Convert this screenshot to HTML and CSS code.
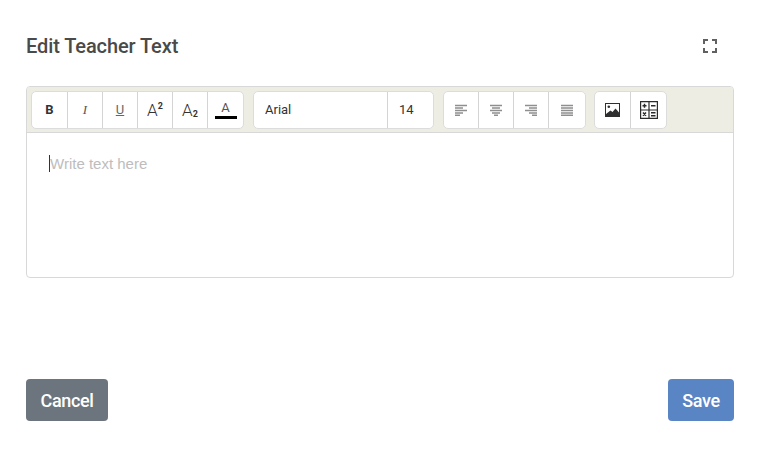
FILE: index.html
```html
<!DOCTYPE html>
<html lang="en">
<head>
  <meta charset="UTF-8" />
  <title>Edit Teacher Text</title>
  <link rel="stylesheet" href="styles.css">
</head>
<body>
  <div class="modal">
    <div class="modal-header">
      <h1>Edit Teacher Text</h1>
      <button class="expand-btn" aria-label="Fullscreen">
        <svg width="14" height="14" viewBox="0 0 14 14" fill="none" stroke="#616161" stroke-width="2">
          <path d="M1 5V1H5M9 1H13V5M13 9V13H9M5 13H1V9" />
        </svg>
      </button>
    </div>

    <div class="editor">
      <div class="toolbar">
        <div class="tool-group">
          <button class="tool tool-first tool-bold">B</button>
          <button class="tool tool-italic">I</button>
          <button class="tool tool-underline">U</button>
          <button class="tool tool-script">A<sup>2</sup></button>
          <button class="tool tool-script">A<sub>2</sub></button>
          <button class="tool tool-color"><span>A</span><i class="color-bar"></i></button>
        </div>

        <div class="tool-group">
          <div class="tool tool-font">Arial</div>
          <div class="tool tool-size">14</div>
        </div>

        <div class="tool-group">
          <button class="tool">
            <svg width="12" height="12" viewBox="0 0 12 12" stroke="#8f8f8f" stroke-width="1.4">
              <path d="M0 1.500H12M0 4H8M0 6.500H12M0 9H8M0 11.300H5" />
            </svg>
          </button>
          <button class="tool">
            <svg width="12" height="12" viewBox="0 0 12 12" stroke="#8f8f8f" stroke-width="1.4">
              <path d="M0 1.500H12M2 4H10M0 6.500H12M2 9H10M4 11.300H8" />
            </svg>
          </button>
          <button class="tool">
            <svg width="12" height="12" viewBox="0 0 12 12" stroke="#8f8f8f" stroke-width="1.4">
              <path d="M0 1.500H12M4 4H12M0 6.500H12M4 9H12M7 11.300H12" />
            </svg>
          </button>
          <button class="tool tool-last">
            <svg width="12" height="12" viewBox="0 0 12 12" stroke="#8f8f8f" stroke-width="1.4">
              <path d="M0 1.500H12M0 4H12M0 6.500H12M0 9H12M0 11.300H12" />
            </svg>
          </button>
        </div>

        <div class="tool-group">
          <button class="tool tool-wide">
            <svg width="15" height="14" viewBox="0 0 15 14">
              <path fill="#2f2f2f" d="M0 0H15V14H0Z" />
              <path fill="#fff" d="M1 1H14V9.500L10.500 5.500L7.500 9L5.500 7.500L1 11Z" />
              <circle cx="3.800" cy="3.800" r="1.300" fill="#2f2f2f" />
            </svg>
          </button>
          <button class="tool">
            <svg width="18" height="18" viewBox="0 0 18 18" fill="none" stroke="#2b2b2b" stroke-width="1.200">
              <path d="M.6.600H17.400V17.400H.6ZM9 .6V17.400M.6 9H17.400" />
              <path d="M2.500 4.800H6.500M4.500 2.800V6.800M11 4.800H15.500M3 11.500L6 14.800M6 11.500L3 14.800M11 11.800H15.500M11 14.800H15.500" stroke-width="1.500" />
            </svg>
          </button>
        </div>
      </div>

      <div class="editor-body">
        <span class="caret"></span><span class="placeholder">Write text here</span>
      </div>
    </div>

    <div class="modal-footer">
      <button class="btn btn-cancel">Cancel</button>
      <button class="btn btn-save">Save</button>
    </div>
  </div>
</body>
</html>
```

FILE: styles.css
```css
* {
  box-sizing: border-box;
  margin: 0;
  padding: 0;
}

body {
  font-family: Roboto, "Liberation Sans", sans-serif;
  background-color: #fff;
  color: #212529;
}

.modal {
  padding: 30px 29px 28px 26px;
}

.modal-header {
  display: flex;
  align-items: center;
  justify-content: space-between;
  height: 32px;
  margin-bottom: 24px;
}

h1 {
  font-size: 20px;
  font-weight: 500;
  color: #4a4a4a;
  letter-spacing: -0.1px;
}

.expand-btn {
  display: flex;
  width: 14px;
  height: 14px;
  margin-right: 17px;
  border: none;
  background: none;
}

.editor {
  border: 1px solid #d8d8d8;
  border-radius: 4px;
  overflow: hidden;
}

.toolbar {
  display: flex;
  gap: 9px;
  height: 46px;
  padding: 4px;
  background-color: #edede4;
  border-bottom: 1px solid #d8d8d8;
}

.tool-group {
  display: flex;
  height: 38px;
  background: #fff;
  border: 1px solid #dcdcdc;
  border-radius: 5px;
}

.tool-group:last-child {
  margin-left: -1px;
}

.tool {
  display: flex;
  align-items: center;
  justify-content: center;
  width: 35px;
  height: 100%;
  padding-bottom: 1px;
  border: none;
  border-right: 1px solid #d4d4d4;
  background: none;
  font-family: Roboto, "Liberation Sans", sans-serif;
  font-size: 13px;
  color: #333;
}

.tool:last-child {
  border-right: none;
}

.tool-first,
.tool-last,
.tool-wide {
  width: 36px;
}

.tool-bold {
  font-weight: 700;
}

.tool-italic {
  font-family: "Liberation Serif", serif;
  font-style: italic;
  color: #555;
}

.tool-underline {
  text-decoration: underline;
  color: #666;
}

.tool-script {
  font-size: 17px;
  font-weight: 300;
}

.tool-script sup,
.tool-script sub {
  font-size: 9px;
  font-weight: 700;
}

.tool-script sup {
  margin-bottom: 7px;
}

.tool-script sub {
  margin-top: 9px;
}

.tool-color {
  flex-direction: column;
  line-height: 13px;
  color: #555;
}

.color-bar {
  display: block;
  width: 22px;
  height: 3px;
  margin-top: 2px;
  background: #000;
}

.tool-font {
  justify-content: flex-start;
  width: 134px;
  padding-left: 11px;
}

.tool-size {
  justify-content: flex-start;
  width: 45px;
  padding-left: 11px;
}

.editor-body {
  display: flex;
  align-items: flex-start;
  height: 144px;
  padding: 22px 22px 0;
}

.caret {
  width: 1px;
  height: 17px;
  background: #333;
}

.placeholder {
  font-family: "Liberation Sans", sans-serif;
  font-size: 15px;
  line-height: 18px;
  color: #bdbdbd;
}

.modal-footer {
  display: flex;
  justify-content: space-between;
  margin-top: 101px;
}

.btn {
  height: 42px;
  border: none;
  border-radius: 4px;
  font-family: Roboto, "Liberation Sans", sans-serif;
  font-size: 18px;
  font-weight: 500;
  color: #fff;
  letter-spacing: -0.35px;
}

.btn-cancel {
  width: 82px;
  background-color: #6c757d;
}

.btn-save {
  width: 66px;
  background-color: #5a85c5;
}
```
